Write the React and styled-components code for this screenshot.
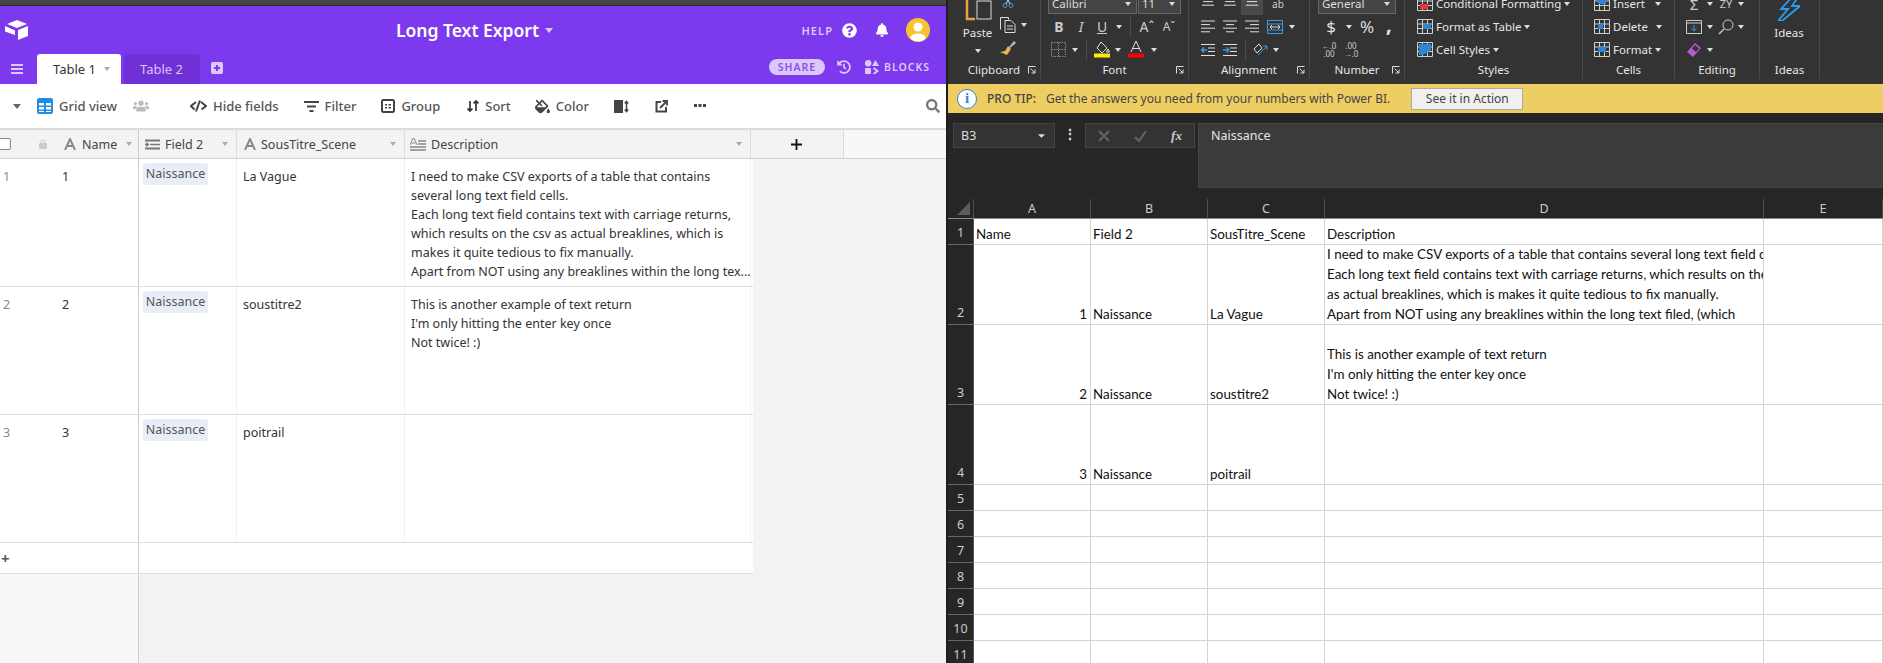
import React from 'react';
import styled, { createGlobalStyle } from 'styled-components';
import { FaBell, FaFillDrip, FaHistory, FaQuestionCircle, FaSearch, FaUsers, FaCaretDown } from 'react-icons/fa';

const Global = createGlobalStyle`
  html, body { margin: 0; padding: 0; height: 663px; overflow: hidden; background: #262626; }
  body { font-family: "Noto Sans", "Open Sans", sans-serif; }
  #root { height: 663px; }
`;

const UI = '"Noto Sans", "Open Sans", sans-serif';
const SHEET = 'Lato, "Noto Sans", sans-serif';

const Page = styled.div`
  display: flex;
  width: 1883px;
  height: 663px;
  overflow: hidden;
`;

/* ---------- airtable side ---------- */
const AirPane = styled.div`
  width: 946px;
  flex: none;
  display: flex;
  flex-direction: column;
  background: #f3f3f3;
`;
const TopStrip = styled.div`
  height: 5px;
  background: #444;
  border-bottom: 1px solid #2b2b2b;
`;
const Purple = styled.header`
  height: 78px;
  flex: none;
  background: #7c39ed;
  display: flex;
  flex-direction: column;
`;
const TitleRow = styled.div`
  height: 48px;
  display: grid;
  grid-template-columns: 1fr auto 1fr;
  align-items: center;
  padding: 0 16px 0 5px;
`;
const Logo = styled.svg`
  width: 24px;
  height: 22px;
  color: #fff;
`;
const Title = styled.div`
  font-size: 17.5px;
  font-weight: 600;
  color: #fff;
  display: flex;
  align-items: center;
  gap: 6px;
  margin-left: 14px;
`;
const Account = styled.div`
  display: flex;
  align-items: center;
  justify-content: flex-end;
  color: #fff;
`;
const HelpText = styled.span`
  font-size: 11px;
  font-weight: 600;
  letter-spacing: 1.1px;
  color: #dcc8fb;
  margin-right: 9px;
`;
const Avatar = styled.div`
  width: 24px;
  height: 24px;
  border-radius: 50%;
  background: #f7c42f;
  margin-left: 17px;
  overflow: hidden;
`;
const TabRow = styled.div`
  height: 30px;
  display: flex;
  align-items: flex-end;
  padding-left: 11px;
`;
const Burger = styled.svg`
  width: 12px;
  height: 10px;
  margin: 0 14px 10px 0;
  color: #dcc8fb;
`;
const Tab = styled.div`
  height: 30px;
  width: ${p => p.$w}px;
  margin-right: 3px;
  border-radius: 3px 3px 0 0;
  background: ${p => (p.$active ? '#fff' : '#6f30d5')};
  color: ${p => (p.$active ? '#333' : '#d8c4f9')};
  font-size: 13px;
  display: flex;
  align-items: center;
  gap: 8px;
  padding-left: 16px;
  box-sizing: border-box;
`;
const AddTab = styled.svg`
  width: 12px;
  height: 12px;
  margin: 0 0 10px 8px;
  color: #dcc8fb;
`;
const TabRight = styled.div`
  margin-left: auto;
  padding-right: 16px;
  height: 30px;
  display: flex;
  align-items: center;
  color: #dcc8fb;
  padding-bottom: 4px;
  box-sizing: border-box;
`;
const SharePill = styled.span`
  width: 56px;
  height: 16px;
  border-radius: 8px;
  background: #dcc8fb;
  color: #8c50ee;
  font-size: 10.5px;
  font-weight: 600;
  letter-spacing: 1px;
  display: flex;
  align-items: center;
  justify-content: center;
  margin-right: 12px;
`;
const BlocksText = styled.span`
  font-size: 10.5px;
  font-weight: 600;
  letter-spacing: 1px;
  margin-left: 5px;
`;

const Toolbar = styled.div`
  height: 44px;
  flex: none;
  background: #fff;
  display: flex;
  align-items: center;
  color: #555;
  font-size: 13px;
  font-weight: 500;
  padding-left: 13px;
`;
const ToolItem = styled.div`
  display: flex;
  align-items: center;
  gap: 6px;
  margin-left: ${p => p.$ml || 0}px;
  flex: none;
`;
const Caret = styled.span`
  display: inline-block;
  flex: none;
  width: 0;
  height: 0;
  border-left: ${p => p.$s || 3}px solid transparent;
  border-right: ${p => p.$s || 3}px solid transparent;
  border-top: ${p => (p.$s || 3) + 1}px solid ${p => p.$c || '#aaa'};
`;

const GridArea = styled.div`
  flex: 1;
  display: flex;
  flex-direction: column;
  background: #f3f3f3;
  font-size: 12.5px;
  color: #333;
`;
const columns = '138px 1px 98px 168px 346px';
const HeadRow = styled.div`
  height: 31px;
  flex: none;
  display: grid;
  grid-template-columns: ${columns} 93px 1fr;
  border-top: 2px solid #dcdcdc;
  border-bottom: 1px solid #d0d0d0;
  background: #f3f3f3;
  box-sizing: border-box;
  color: #444;
`;
const Divider = styled.div`
  background: #ccc;
`;
const HeadCell = styled.div`
  display: flex;
  align-items: center;
  padding-left: ${p => p.$pl || 6}px;
  padding-right: 8px;
  gap: 5px;
  border-right: ${p => (p.$last ? 'none' : '1px solid #dcdcdc')};
  box-sizing: border-box;
  justify-content: ${p => (p.$center ? 'center' : 'flex-start')};
  background: ${p => (p.$pale ? '#f8f8f8' : 'transparent')};
  ${Caret} { margin-left: auto; }
`;
const LeftHead = styled.div`
  display: flex;
  align-items: center;
  color: #444;
  overflow: hidden;
`;
const Check = styled.div`
  width: 14px;
  height: 10px;
  flex: none;
  margin-left: -5px;
  border: 1px solid #888;
  border-radius: 2px;
  background: #fff;
`;
const DataRow = styled.div`
  height: 128px;
  flex: none;
  width: 753px;
  display: grid;
  grid-template-columns: ${columns};
  background: #fff;
  border-bottom: 1px solid #dedede;
  box-sizing: border-box;
`;
const RowLead = styled.div`
  display: grid;
  grid-template-columns: 62px 1fr;
  padding-top: 8px;
  line-height: 19px;
  color: #333;
`;
const RowIndex = styled.span`
  color: #888;
  padding-left: 3px;
`;
const Cell = styled.div`
  border-right: 1px solid #f1f1f1;
  box-sizing: border-box;
  padding: ${p => (p.$chip ? '4px 0 0 4px' : '8px 0 0 6px')};
  line-height: 19px;
  overflow: hidden;
`;
const Chip = styled.span`
  display: inline-block;
  height: 22px;
  width: 65px;
  line-height: 22px;
  text-align: center;
  border-radius: 3px;
  background: #e9edf7;
  color: #555;
`;
const DescLine = styled.div`
  white-space: nowrap;
`;
const AddRow = styled.div`
  height: 31px;
  flex: none;
  width: 753px;
  display: grid;
  grid-template-columns: 138px 1px 1fr;
  background: #fff;
  border-bottom: 1px solid #dedede;
  box-sizing: border-box;
`;
const AddPlus = styled.div`
  color: #555;
  font-size: 15px;
  font-weight: 700;
  padding-left: 1px;
  line-height: 30px;
`;
const Filler = styled.div`
  flex: 1;
  display: grid;
  grid-template-columns: 138px 1px 1fr;
`;
const Pale = styled.div`
  background: #f8f8f8;
`;

/* ---------- excel side ---------- */
const ExcelPane = styled.div`
  flex: 1;
  display: flex;
  flex-direction: column;
  background: #262626;
  border-left: 2px solid #1e1e1e;
  min-width: 0;
`;
const Ribbon = styled.div`
  height: 84px;
  flex: none;
  display: flex;
  background: #333;
  color: #e6e6e6;
  font-size: 11.5px;
`;
const Group = styled.section`
  width: ${p => p.$w}px;
  flex: none;
  height: 79px;
  border-right: 1px solid #4a4a4a;
  display: flex;
  flex-direction: column;
  justify-content: flex-end;
`;
const GroupBody = styled.div`
  flex: none;
  display: flex;
  flex-direction: column;
  justify-content: flex-end;
  height: 61px;
  padding-left: ${p => p.$pl || 0}px;
`;
const RRow = styled.div`
  height: 23px;
  flex: none;
  display: flex;
  align-items: center;
  gap: ${p => p.$gap || 0}px;
`;
const Slot = styled.span`
  width: ${p => p.$w}px;
  height: 23px;
  flex: none;
  display: inline-flex;
  align-items: center;
  justify-content: center;
  background: ${p => (p.$on ? '#4a4a4a' : 'transparent')};
`;
const Sep = styled.span`
  width: 1px;
  height: 21px;
  background: #4d4d4d;
  margin: 0 ${p => p.$m}px;
  flex: none;
`;
const Combo = styled.div`
  height: 21px;
  width: ${p => p.$w}px;
  margin-right: 1px;
  box-sizing: border-box;
  background: #444;
  border: 1px solid #666;
  display: flex;
  align-items: center;
  justify-content: space-between;
  padding: 0 5px 0 3px;
  color: #ddd;
  flex: none;
`;
const GroupLabel = styled.div`
  height: 18px;
  flex: none;
  display: grid;
  grid-template-columns: 1fr auto 1fr;
  align-items: center;
  padding-bottom: 0;
  line-height: 18px;
  margin-top: 0;
`;
const Launcher = styled.svg`
  width: 8px;
  height: 8px;
  justify-self: end;
  margin-right: 4px;
  color: #ddd;
`;
const BigCol = styled.div`
  width: ${p => p.$w}px;
  display: flex;
  flex-direction: column;
  align-items: center;
  flex: none;
`;
const BigLabel = styled.span`
  line-height: 16px;
  margin-top: 4px;
`;
const Split = styled.div`
  display: flex;
  align-items: flex-end;
  height: 61px;
  padding-left: ${p => p.$pl || 0}px;
  padding-bottom: 0;
`;
const StyleBtn = styled.div`
  display: flex;
  align-items: center;
  gap: 3px;
  height: 23px;
  flex: none;
`;
const ProTip = styled.div`
  height: 29px;
  flex: none;
  background: #eecd63;
  display: flex;
  align-items: center;
  color: #444;
  font-size: 12px;
  padding-left: 9px;
`;
const InfoDot = styled.div`
  width: 20px;
  height: 20px;
  border-radius: 50%;
  background: #fff;
  border: 1.5px solid #2b88d8;
  color: #2b88d8;
  font: 700 15px/20px "Liberation Serif", serif;
  text-align: center;
  flex: none;
  box-sizing: border-box;
  line-height: 17px;
`;
const ProLabel = styled.b`
  margin-left: 10px;
  font-weight: 500;
`;
const ProText = styled.span`
  margin-left: 10px;
`;
const ProButton = styled.button`
  margin-left: 21px;
  width: 112px;
  height: 22px;
  background: #f0f0f0;
  border: 1px solid #aaa;
  color: #444;
  font: 12px ${UI};
  padding: 0;
`;
const FormulaBar = styled.div`
  height: 86px;
  flex: none;
  display: flex;
  align-items: flex-start;
  padding: 10px 0 0 5px;
  box-sizing: border-box;
  background: #262626;
`;
const NameBox = styled.div`
  width: 102px;
  height: 25px;
  box-sizing: border-box;
  background: #333;
  border: 1px solid #444;
  color: #ddd;
  font-size: 12.5px;
  display: flex;
  align-items: center;
  justify-content: space-between;
  padding: 0 7px;
  flex: none;
`;
const Dots = styled.div`
  width: 30px;
  color: #ddd;
  text-align: center;
  font-weight: 700;
  font-size: 14px;
  line-height: 22px;
  flex: none;
`;
const FxBox = styled.div`
  width: 110px;
  height: 25px;
  box-sizing: border-box;
  background: #333;
  border: 1px solid #444;
  display: flex;
  align-items: center;
  justify-content: space-around;
  color: #666;
  flex: none;
  margin-right: 3px;
`;
const Fx = styled.span`
  color: #ccc;
  font: italic 700 13px "Liberation Serif", serif;
`;
const FormulaInput = styled.div`
  flex: 1;
  height: 65px;
  background: #3b3b3b;
  border: 1px solid #444;
  border-right: none;
  box-sizing: border-box;
  color: #e6e6e6;
  font-size: 12.5px;
  padding: 3px 12px;
`;
const sheetCols = '26px 117px 117px 117px 439px 1fr';
const ColHeads = styled.div`
  height: 20px;
  flex: none;
  display: grid;
  grid-template-columns: ${sheetCols};
  border-bottom: 1px solid #8a8a8a;
  box-sizing: border-box;
  color: #ccc;
  font-size: 12.5px;
  background: #262626;
`;
const ColHead = styled.div`
  border-right: 1px solid #4d4d4d;
  text-align: center;
  line-height: 19px;
`;
const Corner = styled.svg`
  width: 13px;
  height: 13px;
  display: block;
  margin: 3px 0 0 9px;
`;
const Sheet = styled.div`
  flex: 1;
  display: grid;
  grid-template-columns: ${sheetCols};
  grid-auto-rows: min-content;
  background: #fff;
  color: #111;
  font-family: ${SHEET};
  font-size: 13.4px;
  line-height: 20px;
`;
const RowHead = styled.div`
  height: ${p => p.$h}px;
  box-sizing: border-box;
  background: #262626;
  color: #ccc;
  border-bottom: 1px solid #666;
  border-right: 1px solid #555;
  display: flex;
  align-items: flex-end;
  justify-content: center;
  font-family: ${UI};
  font-size: 12.5px;
  padding-bottom: 1px;
`;
const SheetCell = styled.div`
  height: ${p => p.$h}px;
  box-sizing: border-box;
  border-right: 1px solid #d4d4d4;
  border-bottom: 1px solid #d4d4d4;
  display: flex;
  flex-direction: column;
  justify-content: flex-end;
  padding: 0 3px 0 2px;
  text-align: ${p => (p.$num ? 'right' : 'left')};
  white-space: nowrap;
  overflow: hidden;
`;

/* ---------- drawings ---------- */
const Svg = ({ w = 16, h = 16, vb, children, ...rest }) => (
  <svg width={w} height={h} viewBox={vb || `0 0 ${w} ${h}`} fill="none" style={{ flex: 'none', display: 'block' }} {...rest}>{children}</svg>
);
const GridIcon = () => (
  <Svg>
    <rect x="0" y="0" width="16" height="16" rx="2" fill="#1f8ee0" />
    <path d="M2 5h5v2.5H2zM9 5h5v2.5H9zM2 9h5v2.5H2zM9 9h5v2.5H9z" fill="#fff" />
    <path d="M2 13h5v1H2zM9 13h5v1H9z" fill="#fff" />
  </Svg>
);
const HideIcon = () => (
  <Svg w={17} h={12}>
    <path d="M6 2 1 6l3.5 3.5M11 2l5 4-4.500 3.500" stroke="#444" strokeWidth="2" />
    <path d="M10 0.500 6 11.500" stroke="#444" strokeWidth="2" />
  </Svg>
);
const FilterIcon = () => (
  <Svg w={15} h={12}>
    <path d="M0 1h15v2H0zM3 5.500h9v2H3zM5.500 10h4v2h-4z" fill="#444" />
  </Svg>
);
const GroupIcon = () => (
  <Svg w={14} h={14}>
    <rect x="1" y="1" width="12" height="12" rx="1.500" stroke="#444" strokeWidth="2" />
    <path d="M4 5h2v1.500H4zM7.500 5H10v1.500H7.500zM4 8h2v1.500H4zM7.500 8H10v1.500H7.500z" fill="#444" />
  </Svg>
);
const SortIcon = () => (
  <Svg w={12} h={12}>
    <path d="M3 1v10M0.500 8.500 3 11l2.500-2.500M9 11V1M6.500 3.500 9 1l2.500 2.500" stroke="#333" strokeWidth="1.700" />
  </Svg>
);
const RowHeightIcon = () => (
  <Svg w={15} h={13}>
    <rect x="0" y="0" width="9" height="13" fill="#444" />
    <path d="M12.500 2v9M10.800 3.500l1.700-2 1.700 2M10.800 9.500l1.700 2 1.700-2" stroke="#444" strokeWidth="1.500" />
  </Svg>
);
const ShareIcon = () => (
  <Svg w={13} h={13}>
    <path d="M6 2H1.500v9.500H11V7" stroke="#444" strokeWidth="2" />
    <path d="M5 8 11 2M7.500 1H12v4.500" stroke="#444" strokeWidth="1.800" />
  </Svg>
);
const AIcon = () => (
  <Svg w={12} h={12}>
    <path d="M1 12 6 1l5 11M3 8h6" stroke="#8a8a8a" strokeWidth="2" />
  </Svg>
);
const SelectIcon = () => (
  <Svg w={15} h={11}>
    <path d="M0 1.500h15M0 9.500h15" stroke="#777" strokeWidth="2" />
    <path d="M5 5.500h10M2 3.500v4M0 5.500h4" stroke="#777" strokeWidth="1.600" />
  </Svg>
);
const LongIcon = () => (
  <Svg w={16} h={13}>
    <path d="M0 7 3 0h1l3 7M1.500 5h4" stroke="#888" strokeWidth="1" />
    <path d="M8 3h8M8 6h8M0 9h16M0 12h16" stroke="#888" strokeWidth="1.300" />
  </Svg>
);
const LockIcon = () => (
  <Svg w={8} h={10}>
    <rect y="4" width="8" height="6" rx="1" fill="#ccc" />
    <path d="M2 4.500V3a2 2 0 0 1 4 0v1.500" stroke="#ccc" strokeWidth="1.200" />
  </Svg>
);
const BlocksIcon = () => (
  <Svg w={14} h={14}>
    <circle cx="3.200" cy="3.200" r="3.200" fill="currentColor" />
    <path d="M10.500 0 14 6H7z" fill="currentColor" />
    <rect y="8" width="6" height="6" rx="1" fill="currentColor" />
    <path d="M8.500 8 12.500 11l-4 3" stroke="currentColor" strokeWidth="2" />
  </Svg>
);
const Lines = ({ kind }) => {
  const sets = {
    top: [[0, 14], [2, 12], [1, 13]],
    left: [[0, 14], [0, 9], [0, 14], [0, 9]],
    center: [[0, 14], [3, 11], [0, 14], [3, 11]],
    right: [[0, 14], [5, 14], [0, 14], [5, 14]],
  };
  const rows = sets[kind];
  return (
    <Svg w={14} h={13}>
      {rows.map((r, i) => <path key={i} d={`M${r[0]} ${1 + i * 3.600}H${r[1]}`} stroke="#e0e0e0" strokeWidth="1" />)}
    </Svg>
  );
};
const Indent = ({ out }) => (
  <Svg w={14} h={12}>
    <path d="M0 .5h14M7 4h7M7 7.500h7M0 11.500h14" stroke="#e0e0e0" />
    <path d={out ? 'M6 6H0M3 3.500 .5 6 3 8.500' : 'M0 6h6M3.500 3.500 6 6 3.500 8.500'} stroke="#3b9ce0" strokeWidth="1.300" />
  </Svg>
);
const TableIcon = ({ patch }) => (
  <Svg w={16} h={15}>
    <path d="M.5.500h15v14H.5zM.5 5h15M.5 9.500h15M5.500.500v14M10.500.500v14" stroke="#cfcfcf" strokeWidth="1" />
    {patch}
  </Svg>
);
const Launch = () => (
  <Launcher viewBox="0 0 8 8">
    <path d="M.5 7.500V.5h7" stroke="currentColor" fill="none" />
    <path d="M2.500 2.500 7 7M7 3.500V7H3.500" stroke="currentColor" fill="none" />
  </Launcher>
);

const rowHeights = [26, 80, 80, 80, 26, 26, 26, 26, 26, 26, 26];
const sheetRows = [
  { a: 'Name', b: 'Field 2', c: 'SousTitre_Scene', d: ['Description'] },
  { a: '1', num: true, b: 'Naissance', c: 'La Vague', d: [
    'I need to make CSV exports of a table that contains several long text field cells.',
    'Each long text field contains text with carriage returns, which results on the csv',
    'as actual breaklines, which is makes it quite tedious to fix manually.',
    'Apart from NOT using any breaklines within the long text filed, (which',
  ] },
  { a: '2', num: true, b: 'Naissance', c: 'soustitre2', d: ['This is another example of text return', "I'm only hitting the enter key once", 'Not twice! :)'] },
  { a: '3', num: true, b: 'Naissance', c: 'poitrail', d: [] },
];

const airRows = [
  { n: '1', sub: 'La Vague', desc: [
    'I need to make CSV exports of a table that contains',
    'several long text field cells.',
    'Each long text field contains text with carriage returns,',
    'which results on the csv as actual breaklines, which is',
    'makes it quite tedious to fix manually.',
    'Apart from NOT using any breaklines within the long tex...',
  ] },
  { n: '2', sub: 'soustitre2', desc: ['This is another example of text return', "I'm only hitting the enter key once", 'Not twice! :)'] },
  { n: '3', sub: 'poitrail', desc: [] },
];

function AirtableSide() {
  return (
    <AirPane>
      <TopStrip />
      <Purple>
        <TitleRow>
          <Logo viewBox="0 0 24 22">
            <path d="M12 1 22 5 12 9 2 5Z" fill="currentColor" />
            <path d="M13 11 23 7V17L13 21Z" fill="currentColor" />
            <path d="M0 7 10 11.500V16L0 12.500Z" fill="currentColor" />
          </Logo>
          <Title>Long Text Export <Caret $s={4} $c="#dcc8fb" /></Title>
          <Account>
            <HelpText>HELP</HelpText>
            <FaQuestionCircle size={15} />
            <FaBell size={14} style={{ marginLeft: 18 }} />
            <Avatar>
              <svg viewBox="0 0 24 24" width="24" height="24">
                <circle cx="12" cy="9" r="4.500" fill="#fff" />
                <ellipse cx="12" cy="19.500" rx="7.500" ry="4" fill="#fff" />
              </svg>
            </Avatar>
          </Account>
        </TitleRow>
        <TabRow>
          <Burger viewBox="0 0 12 10"><path d="M0 1h12M0 5h12M0 9h12" stroke="currentColor" strokeWidth="2" /></Burger>
          <Tab $active $w={84}>Table 1 <Caret $s={3.500} /></Tab>
          <Tab $w={76}>Table 2</Tab>
          <AddTab viewBox="0 0 12 12"><path fillRule="evenodd" d="M2 0h8a2 2 0 0 1 2 2v8a2 2 0 0 1-2 2H2a2 2 0 0 1-2-2V2a2 2 0 0 1 2-2Zm3 3v2H3v2h2v2h2V7h2V5H7V3Z" fill="currentColor" /></AddTab>
          <TabRight>
            <SharePill>SHARE</SharePill>
            <FaHistory size={14} />
            <span style={{ width: 14 }} />
            <BlocksIcon />
            <BlocksText>BLOCKS</BlocksText>
          </TabRight>
        </TabRow>
      </Purple>
      <Toolbar>
        <Caret $s={4} $c="#666" />
        <ToolItem $ml={16}><GridIcon />Grid view</ToolItem>
        <ToolItem $ml={16}><FaUsers size={16} color="#bbb" /></ToolItem>
        <ToolItem $ml={41}><HideIcon />Hide fields</ToolItem>
        <ToolItem $ml={25}><FilterIcon />Filter</ToolItem>
        <ToolItem $ml={25}><GroupIcon />Group</ToolItem>
        <ToolItem $ml={27}><SortIcon />Sort</ToolItem>
        <ToolItem $ml={24}><FaFillDrip size={15} color="#444" />Color</ToolItem>
        <ToolItem $ml={25}><RowHeightIcon /></ToolItem>
        <ToolItem $ml={26}><ShareIcon /></ToolItem>
        <ToolItem $ml={26}><Svg w={12} h={4}><path d="M0 0h3v3H0zM4.500 0h3v3h-3zM9 0h3v3H9z" fill="#444" /></Svg></ToolItem>
        <ToolItem $ml={220}><FaSearch size={14} color="#777" /></ToolItem>
      </Toolbar>
      <GridArea>
        <HeadRow>
          <LeftHead>
            <Check />
            <span style={{ width: 28 }} />
            <LockIcon />
            <span style={{ width: 17 }} />
            <AIcon />
            <span style={{ width: 6 }} />
            Name
            <span style={{ width: 9 }} />
            <Caret $s={3.500} />
          </LeftHead>
          <Divider />
          <HeadCell><SelectIcon />Field 2<Caret $s={3.500} /></HeadCell>
          <HeadCell $pl={7}><AIcon />SousTitre_Scene<Caret $s={3.500} /></HeadCell>
          <HeadCell $pl={5}><LongIcon />Description<Caret $s={3.500} /></HeadCell>
          <HeadCell $center $pl={0}>
            <Svg w={11} h={11}><path d="M5.500 0v11M0 5.500h11" stroke="#111" strokeWidth="1.800" /></Svg>
          </HeadCell>
          <HeadCell $last $pale />
        </HeadRow>
        {airRows.map(r => (
          <DataRow key={r.n}>
            <RowLead><RowIndex>{r.n}</RowIndex><span>{r.n}</span></RowLead>
            <Divider />
            <Cell $chip><Chip>Naissance</Chip></Cell>
            <Cell>{r.sub}</Cell>
            <Cell>{r.desc.map(l => <DescLine key={l}>{l}</DescLine>)}</Cell>
          </DataRow>
        ))}
        <AddRow><AddPlus>+</AddPlus><Divider /><span /></AddRow>
        <Filler><Pale /><Divider /><span /></Filler>
      </GridArea>
    </AirPane>
  );
}

function Ribbons() {
  const c = <Caret $s={3} $c="#ddd" />;
  return (
    <Ribbon>
      <Group $w={92}>
        <Split $pl={12}>
          <BigCol $w={35}>
            <Svg w={28} h={26}>
              <path d="M3 0v24h8" stroke="#e8a33d" strokeWidth="2.500" />
              <rect x="13" y="6" width="14" height="18" fill="#333" stroke="#ddd" />
            </Svg>
            <BigLabel>Paste</BigLabel>
            <Slot $w={10} style={{ height: 20 }}>{c}</Slot>
          </BigCol>
          <div>
            <RRow>
              <Slot $w={26}>
                <Svg w={12} h={12}><path d="M4 0l4 8M8 0 4 8" stroke="#ddd" /><circle cx="3" cy="9.500" r="2" stroke="#3b9ce0" /><circle cx="9" cy="9.500" r="2" stroke="#3b9ce0" /></Svg>
              </Slot>
            </RRow>
            <RRow>
              <Slot $w={26}>
                <Svg w={16} h={16}><path d="M.5 12.500V.5h8v2M5 3.500h6l4 4v8H5z" stroke="#ddd" /><path d="M7 9h6M7 12h6" stroke="#ddd" /></Svg>
              </Slot>
              {c}
            </RRow>
            <RRow style={{ marginBottom: 2 }}>
              <Slot $w={26}>
                <Svg w={16} h={15}><path d="M9 7 14 1l2 2-6 5z" fill="#bbb" /><path d="M8 6l3 3-4 6-7-3 5-1z" fill="#e8b34d" /></Svg>
              </Slot>
            </RRow>
          </div>
        </Split>
        <GroupLabel><span /><span>Clipboard</span><Launch /></GroupLabel>
      </Group>
      <Group $w={147}>
        <GroupBody $pl={7}>
          <RRow>
            <Combo $w={89}>Calibri {c}</Combo>
            <Combo $w={43}>11 {c}</Combo>
          </RRow>
          <RRow>
            <Slot $w={22} style={{ fontWeight: 700, fontSize: 14, color: '#ccc' }}>B</Slot>
            <Slot $w={22} style={{ fontStyle: 'italic', fontSize: 14, color: '#ccc' }}>I</Slot>
            <Slot $w={20} style={{ textDecoration: 'underline', fontSize: 14, color: '#ccc' }}>U</Slot>
            <Slot $w={14}>{c}</Slot>
            <Slot $w={8}><Sep $m={0} /></Slot>
            <Slot $w={26} style={{ fontSize: 14, color: '#ccc' }}>Aˆ</Slot>
            <Slot $w={18} style={{ fontSize: 12, color: '#ccc' }}>Aˇ</Slot>
          </RRow>
          <RRow>
            <Slot $w={20}>
              <Svg w={15} h={15}><path d="M.5.500h14v14H.5zM.5 7.500h14M7.500.500v14" stroke="#888" strokeDasharray="1.500 1" /></Svg>
            </Slot>
            <Slot $w={14}>{c}</Slot>
            <Slot $w={8}><Sep $m={0} /></Slot>
            <Slot $w={24}>
              <Svg w={16} h={17}><path d="M7 1l6 6-5 5-5-5zM14 8l1.500 3h-3z" stroke="#ddd" /><rect y="12.500" width="16" height="4" fill="#ffeb00" /></Svg>
            </Slot>
            <Slot $w={8}>{c}</Slot>
            <Slot $w={28}>
              <Svg w={16} h={17}><path d="M3 11 8 0l5 11M5 7.500h6" stroke="#ddd" /><rect y="12.500" width="16" height="4" fill="#f00" /></Svg>
            </Slot>
            <Slot $w={8}>{c}</Slot>
          </RRow>
        </GroupBody>
        <GroupLabel><span /><span>Font</span><Launch /></GroupLabel>
      </Group>
      <Group $w={120}>
        <GroupBody $pl={8}>
          <RRow>
            <Slot $w={22}><Lines kind="top" /></Slot>
            <Slot $w={22}><Lines kind="top" /></Slot>
            <Slot $w={22} $on><Lines kind="top" /></Slot>
            <Slot $w={30} style={{ fontSize: 10, color: '#ccc' }}>ab</Slot>
          </RRow>
          <RRow>
            <Slot $w={22}><Lines kind="left" /></Slot>
            <Slot $w={22}><Lines kind="center" /></Slot>
            <Slot $w={22}><Lines kind="right" /></Slot>
            <Slot $w={24}>
              <Svg w={16} h={14}><path d="M.5.500h15v13H.5zM.5 4h15M.5 10h15" stroke="#3b9ce0" /><path d="M3 7h10M5 5 3 7l2 2M11 5l2 2-2 2" stroke="#ddd" /></Svg>
            </Slot>
            <Slot $w={10}>{c}</Slot>
          </RRow>
          <RRow>
            <Slot $w={22}><Indent out /></Slot>
            <Slot $w={22}><Indent /></Slot>
            <Slot $w={8}><Sep $m={0} /></Slot>
            <Slot $w={24}>
              <Svg w={16} h={14}><path d="M1 6 6 1l3 4-5 5z" stroke="#ddd" /><path d="M5 12 14 3M10 3h4v4" stroke="#3b9ce0" /></Svg>
            </Slot>
            <Slot $w={6}>{c}</Slot>
          </RRow>
        </GroupBody>
        <GroupLabel><span /><span>Alignment</span><Launch /></GroupLabel>
      </Group>
      <Group $w={94}>
        <GroupBody $pl={8}>
          <RRow><Combo $w={78}>General {c}</Combo></RRow>
          <RRow>
            <Slot $w={26} style={{ fontSize: 17, color: '#ddd' }}>$</Slot>
            <Slot $w={10}>{c}</Slot>
            <Slot $w={26} style={{ fontSize: 17, color: '#ddd' }}>%</Slot>
            <Slot $w={18} style={{ fontSize: 22, color: '#ddd', fontWeight: 700, paddingBottom: 7, boxSizing: 'border-box' }}>,</Slot>
          </RRow>
          <RRow>
            <Slot $w={22} style={{ fontSize: 8, color: '#ccc', lineHeight: '8px', textAlign: 'center' }}>←.0<br />.00</Slot>
            <Slot $w={22} style={{ fontSize: 8, color: '#ccc', lineHeight: '8px', textAlign: 'center' }}>.00<br />→.0</Slot>
          </RRow>
        </GroupBody>
        <GroupLabel><span /><span>Number</span><Launch /></GroupLabel>
      </Group>
      <Group $w={177}>
        <GroupBody $pl={12}>
          <StyleBtn><TableIcon patch={<rect x="3" y="8" width="8" height="5" fill="#e33" />} />Conditional Formatting {c}</StyleBtn>
          <StyleBtn><TableIcon patch={<path d="M6 5h8v5H6z" fill="#2b88d8" />} />Format as Table {c}</StyleBtn>
          <StyleBtn><TableIcon patch={<path d="M2 2h12v6L6 13H2z" fill="#2b88d8" />} />Cell Styles {c}</StyleBtn>
        </GroupBody>
        <GroupLabel><span /><span>Styles</span><span /></GroupLabel>
      </Group>
      <Group $w={91}>
        <GroupBody $pl={11}>
          <StyleBtn><TableIcon patch={<rect x="4" y="3" width="8" height="5" fill="#2b88d8" />} />Insert <Slot $w={20}>{c}</Slot></StyleBtn>
          <StyleBtn><TableIcon patch={<path d="M4 5h5v5H4z" fill="#2b88d8" />} />Delete <Slot $w={16}>{c}</Slot></StyleBtn>
          <StyleBtn><TableIcon patch={<rect x="4" y="5" width="8" height="5" fill="#2b88d8" />} />Format {c}</StyleBtn>
        </GroupBody>
        <GroupLabel><span /><span>Cells</span><span /></GroupLabel>
      </Group>
      <Group $w={84}>
        <GroupBody $pl={10}>
          <RRow>
            <Slot $w={18} style={{ fontSize: 15, color: '#ccc' }}>Σ</Slot>
            <Slot $w={14}>{c}</Slot>
            <Slot $w={18} style={{ fontSize: 11, color: '#ccc' }}>ZY</Slot>
            <Slot $w={12}>{c}</Slot>
          </RRow>
          <RRow>
            <Slot $w={18}>
              <Svg w={16} h={14}><path d="M.5.500h15v13H.5zM.5 3h15" stroke="#ccc" /><path d="M8 5v6M5.500 8.500 8 11l2.500-2.500" stroke="#3b9ce0" /></Svg>
            </Slot>
            <Slot $w={14}>{c}</Slot>
            <Slot $w={18}>
              <Svg w={16} h={16}><circle cx="10" cy="6" r="5" stroke="#ccc" /><path d="M6 10 1 15" stroke="#ccc" strokeWidth="1.500" /></Svg>
            </Slot>
            <Slot $w={12}>{c}</Slot>
          </RRow>
          <RRow>
            <Slot $w={18}>
              <Svg w={16} h={16}><path d="M9 1l6 5-8 9-6-5z" fill="#b55cc9" /><path d="M9 3l4 3.500-3 3.500-4-3.500z" fill="#333" /></Svg>
            </Slot>
            <Slot $w={14}>{c}</Slot>
          </RRow>
        </GroupBody>
        <GroupLabel><span /><span>Editing</span><span /></GroupLabel>
      </Group>
      <Group $w={59}>
        <Split>
          <BigCol $w={58}>
            <Svg w={22} h={24}><path d="M14 0 3 12h7L0 24h4l18-15h-8l6-9z" fill="none" stroke="#2b9cf0" strokeWidth="1.800" /></Svg>
            <BigLabel>Ideas</BigLabel>
            <span style={{ height: 20 }} />
          </BigCol>
        </Split>
        <GroupLabel><span /><span>Ideas</span><span /></GroupLabel>
      </Group>
    </Ribbon>
  );
}

function ExcelSide() {
  return (
    <ExcelPane>
      <Ribbons />
      <ProTip>
        <InfoDot>i</InfoDot>
        <ProLabel>PRO TIP:</ProLabel>
        <ProText>Get the answers you need from your numbers with Power BI.</ProText>
        <ProButton>See it in Action</ProButton>
      </ProTip>
      <FormulaBar>
        <NameBox>B3 <FaCaretDown size={11} /></NameBox>
        <Dots>⋮</Dots>
        <FxBox>
          <Svg w={12} h={12}><path d="M1 1l10 10M11 1 1 11" stroke="#666" strokeWidth="1.800" /></Svg>
          <Svg w={13} h={12}><path d="M1 7l4 4 7-10" stroke="#666" strokeWidth="2" /></Svg>
          <Fx>fx</Fx>
        </FxBox>
        <FormulaInput>Naissance</FormulaInput>
      </FormulaBar>
      <ColHeads>
        <ColHead><Corner viewBox="0 0 13 13"><path d="M13 0V13H0Z" fill="#5c5c5c" /></Corner></ColHead>
        {['A', 'B', 'C', 'D', 'E'].map(l => <ColHead key={l}>{l}</ColHead>)}
      </ColHeads>
      <Sheet>
        {rowHeights.map((h, i) => {
          const r = sheetRows[i] || { d: [] };
          return (
            <React.Fragment key={i}>
              <RowHead $h={h}>{i + 1}</RowHead>
              <SheetCell $h={h} $num={r.num}>{r.a}</SheetCell>
              <SheetCell $h={h}>{r.b}</SheetCell>
              <SheetCell $h={h}>{r.c}</SheetCell>
              <SheetCell $h={h}>{r.d.map(l => <span key={l}>{l}</span>)}</SheetCell>
              <SheetCell $h={h} />
            </React.Fragment>
          );
        })}
      </Sheet>
    </ExcelPane>
  );
}

export default function App() {
  return (
    <Page>
      <Global />
      <AirtableSide />
      <ExcelSide />
    </Page>
  );
}
